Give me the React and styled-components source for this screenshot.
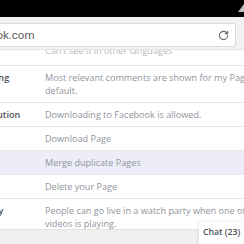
import React from "react";
import styled, { createGlobalStyle } from "styled-components";
import { RotateCw } from "lucide-react";

const Global = createGlobalStyle`
  html, body { margin: 0; padding: 0; background: #ffffff; }
  body { font-family: "Open Sans", "Liberation Sans", sans-serif; overflow: hidden; }
  #root { width: 244px; height: 244px; overflow: hidden; }
`;

const Screen = styled.div`
  position: relative;
  width: 244px;
  height: 244px;
  overflow: hidden;
  background: #ffffff;
  display: flex;
  flex-direction: column;
`;

const StatusBar = styled.div`
  height: 17px;
  flex: none;
  background: #000000;
  display: flex;
  justify-content: flex-end;
  align-items: flex-start;
  padding-top: 4px;
  box-sizing: border-box;
`;

const Toolbar = styled.div`
  height: 33px;
  flex: none;
  background: #f2f2f2;
  display: flex;
  align-items: flex-start;
  padding: 6px 8px 0 0;
  box-sizing: border-box;
  border-bottom: 1px solid #e4e4e4;
  position: relative;
  z-index: 2;
`;

const UrlBox = styled.div`
  flex: 1;
  height: 24px;
  margin-left: -51px;
  background: #ffffff;
  border: 1px solid #dadada;
  border-radius: 2px;
  box-sizing: border-box;
  display: flex;
  align-items: center;
  padding: 0 6px 0 11px;
  font-family: Roboto, "Liberation Sans", sans-serif;
  font-size: 11.5px;
  color: #5f5f5f;
`;

const UrlText = styled.span`
  flex: 1;
  white-space: nowrap;
`;

const Content = styled.div`
  flex: 1;
  display: flex;
  flex-direction: column;
  margin-top: -3px;
`;

const GhostRow = styled.div`
  height: 18px;
  overflow: hidden;
  padding-left: 45px;
  font-size: 9.1px;
  line-height: 13px;
  color: #b4b7bd;
  white-space: nowrap;
  span { display: block; margin-top: -3px; }
`;

const Row = styled.div`
  display: grid;
  grid-template-columns: 115px 1fr;
  margin-left: -70px;
  border-top: 1px solid #e6e7ea;
  padding: 5px 0 5px;
  background: ${(p) => (p.$active ? "#ecedf8" : "#ffffff")};
  font-size: 9.1px;
  line-height: 13px;
`;

const Label = styled.div`
  font-weight: 600;
  color: #4b4f56;
  white-space: nowrap;
`;

const Value = styled.div`
  color: #90949c;
  white-space: nowrap;
`;

const Footer = styled.div`
  position: absolute;
  left: 0;
  right: 0;
  bottom: 0;
  height: 14px;
  background: #efefef;
  border-top: 1px solid #e2e2e2;
  z-index: 2;
`;

const ChatDock = styled.div`
  position: absolute;
  right: 0;
  bottom: 0;
  width: 45px;
  height: 22px;
  background: #ffffff;
  box-shadow: -1px -1px 2px rgba(0, 0, 0, 0.07);
  box-sizing: border-box;
  padding: 4px 0 0 4px;
  font-size: 8.7px;
  line-height: 13px;
  font-weight: 600;
  color: #4b4f56;
  white-space: nowrap;
  z-index: 3;
`;

const rows = [
  { label: "Comment ranking", value: ["Most relevant comments are shown for my Page by", "default."] },
  { label: "Content Distribution", value: ["Downloading to Facebook is allowed."] },
  { label: "Download Page", value: ["Download Page"] },
  { label: "Merge Pages", value: ["Merge duplicate Pages"], active: true },
  { label: "Remove Page", value: ["Delete your Page"] },
  { label: "Live Watch Party", value: ["People can go live in a watch party when one of your", "videos is playing."] },
];

export default function App() {
  return (
    <>
      <Global />
      <Screen>
        <StatusBar>
          <svg width="6" height="8" viewBox="0 0 6 8">
            <path d="M0 8 L6 0 L6 8 Z" fill="#bdbdbd" />
          </svg>
        </StatusBar>
        <Toolbar>
          <UrlBox>
            <UrlText>facebook.com</UrlText>
            <RotateCw size={11} color="#6a6a6a" strokeWidth={2.4} />
          </UrlBox>
        </Toolbar>
        <Content>
          <GhostRow>
            <span>Can't see it in other languages</span>
          </GhostRow>
          {rows.map((r) => (
            <Row key={r.label} $active={r.active}>
              <Label>{r.label}</Label>
              <Value>
                {r.value.map((v) => (
                  <div key={v}>{v}</div>
                ))}
              </Value>
            </Row>
          ))}
        </Content>
        <Footer />
        <ChatDock>Chat (23)</ChatDock>
      </Screen>
    </>
  );
}
